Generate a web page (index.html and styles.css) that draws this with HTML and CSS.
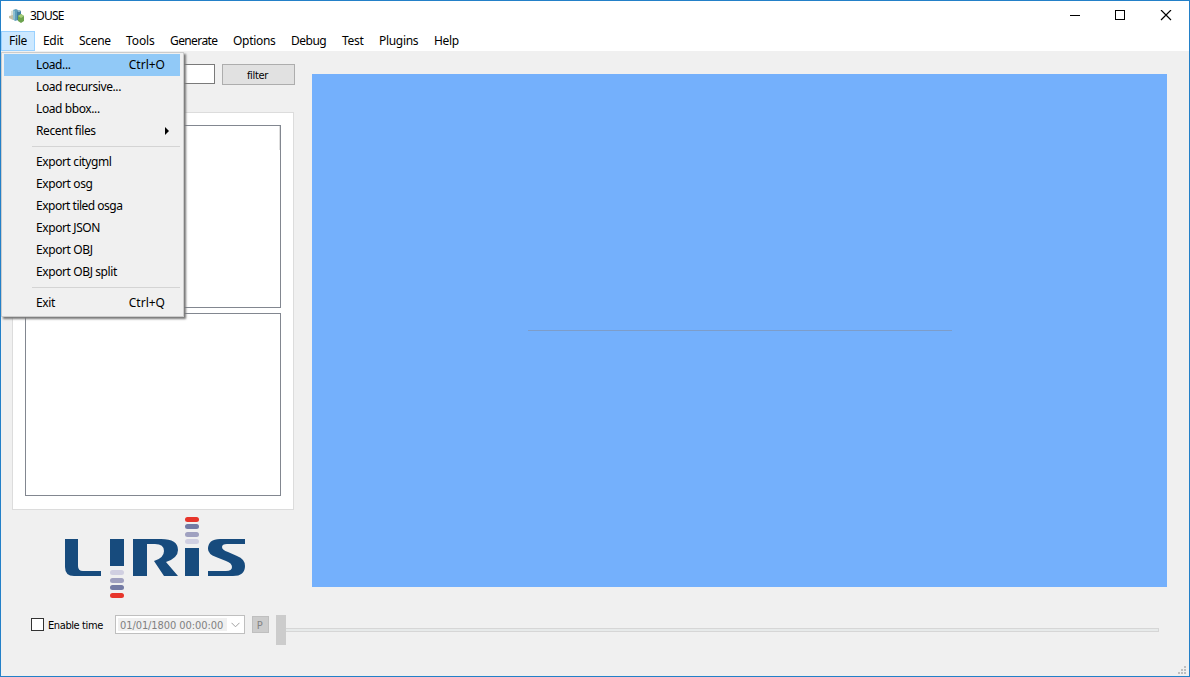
FILE: index.html
```html
<!DOCTYPE html>
<html lang="en">
<head>
<meta charset="utf-8">
<title>3DUSE</title>
<link rel="stylesheet" href="styles.css">
</head>
<body>
<div class="window">
  <header class="titlebar">
    <svg class="app-icon" width="16" height="16" viewBox="0 0 16 16">
      <path d="M2 3l3-1v7l-3 1z" fill="#dce2d6"/>
      <path d="M0 8l4-1 2 3-2 2-4-2z" fill="#c4bfa4"/>
      <path d="M4 2l3-1 2 1v10l-3 1-2-2z" fill="#5f9ebb"/>
      <path d="M4 2l2 1v9l-2-1z" fill="#8fc0d2"/>
      <path d="M8 3l2-1 2 1v8l-2 2-2-1z" fill="#427e9f"/>
      <path d="M8 3l2-1 2 1-2 1z" fill="#a6c9d3"/>
      <path d="M9 8l3-2 3 2v5l-3 2-3-2z" fill="#6ca34e"/>
      <path d="M9 8l3-2 3 2-3 2z" fill="#a5cc79"/>
    </svg>
    <span class="title">3DUSE</span>
    <svg class="controls" width="103" height="12" viewBox="0 0 103 12" fill="none" stroke="#000" shape-rendering="crispEdges">
      <path d="M0 5.500h10"/>
      <rect x="45.500" y=".5" width="9" height="9"/>
      <path d="M91 0l10 10M101 0l-10 10" shape-rendering="auto" stroke-width="1.200"/>
    </svg>
  </header>
  <nav class="menubar">
    <span class="menu-title file active">File</span><span class="menu-title edit">Edit</span><span class="menu-title scene">Scene</span><span class="menu-title tools">Tools</span><span class="menu-title generate">Generate</span><span class="menu-title options">Options</span><span class="menu-title debug">Debug</span><span class="menu-title test">Test</span><span class="menu-title plugins">Plugins</span><span class="menu-title help">Help</span>
  </nav>
  <main class="content">
    <aside class="sidebar">
      <div class="search"><div class="search-input"></div><div class="filter">filter</div></div>
      <div class="panel"><div class="tree"><i class="header-edge"></i></div><div class="tree"></div></div>
      <svg class="logo" width="182" height="82" viewBox="0 0 182 82">
        <g fill="#174b7d">
          <path d="M0 22h13v27q0 5 5 5h18v5H9q-9 0-9-9z"/>
          <path d="M45 22h14v27H45z"/>
          <path d="M68 22h28q17 0 17 11 0 8-12 12l12 14H99L89 44q10-3 10-10 0-7-9-7h-8v32H68z"/>
          <path d="M120 31h14v28h-14z"/>
          <path d="M180 22v5h-18q-5 0-5 3t6 5l9 4q8 3 8 10 0 10-12 10h-25v-5h18q6 0 6-4t-6-6l-10-4q-8-3-8-8 0-10 12-10z"/>
        </g>
        <g fill="#d0cfe1"><rect x="120" y="22" width="14" height="5" rx="2.500"/><rect x="45" y="53" width="14" height="5" rx="2.500"/></g>
        <g fill="#a0a1c0"><rect x="120" y="15" width="14" height="5" rx="2.500"/><rect x="45" y="61" width="14" height="5" rx="2.500"/></g>
        <g fill="#747ba5"><rect x="120" y="7" width="14" height="5" rx="2.500"/><rect x="45" y="68" width="14" height="5" rx="2.500"/></g>
        <g fill="#e7352b"><rect x="120" y="0" width="14" height="5" rx="2.500"/><rect x="45" y="76" width="14" height="5" rx="2.500"/></g>
      </svg>
    </aside>
    <section class="viewport"><div class="horizon"></div></section>
  </main>
  <footer class="timebar">
    <span class="checkbox"></span><span class="enable">Enable time</span>
    <div class="date"><span class="date-value">01/01/1800 00:00:00</span><svg width="9" height="6" viewBox="0 0 9 6" fill="none" stroke="#a0a0a0"><path d="M.5 .8l4 4 4-4"/></svg></div>
    <span class="play">P</span>
    <div class="slider"><span class="handle"></span><span class="track"></span></div>
  </footer>
  <svg class="grip" width="9" height="9" viewBox="0 0 9 9" fill="#bfbfbf"><path d="M6 0h2v2H6zM3 3h2v2H3zM6 3h2v2H6zM0 6h2v2H0zM3 6h2v2H3zM6 6h2v2H6z"/></svg>
  <div class="dropdown">
    <div class="item selected"><span>Load...</span><span class="key">Ctrl+O</span></div>
    <div class="item"><span>Load recursive...</span></div>
    <div class="item"><span>Load bbox...</span></div>
    <div class="item"><span>Recent files</span><svg class="arrow" width="4" height="8" viewBox="0 0 4 8"><path d="M0 0l4 4-4 4z"/></svg></div>
    <div class="separator"></div>
    <div class="item"><span>Export citygml</span></div>
    <div class="item"><span>Export osg</span></div>
    <div class="item"><span class="tight">Export tiled osga</span></div>
    <div class="item"><span>Export JSON</span></div>
    <div class="item"><span>Export OBJ</span></div>
    <div class="item"><span>Export OBJ split</span></div>
    <div class="separator"></div>
    <div class="item"><span>Exit</span><span class="key">Ctrl+Q</span></div>
  </div>
</div>
</body>
</html>
```
FILE: styles.css
```css
* { box-sizing: border-box; }
body { margin: 0; font: 12px/20px "Noto Sans", sans-serif; letter-spacing: -.3px; color: #000; }
.window { position: relative; width: 1190px; height: 677px; border: 1px solid #2380c8; background: #f0f0f0; overflow: hidden; display: flex; flex-direction: column; }
.titlebar { height: 30px; flex: none; background: #fff; display: flex; align-items: center; padding: 0 16px 0 8px; }
.app-icon { margin-right: 5px; }
.title { letter-spacing: -.8px; }
.controls { margin-left: auto; }
.menubar { height: 20px; flex: none; background: #fff; display: flex; }
.menu-title { padding-left: 8px; white-space: nowrap; }
.file { width: 34px; padding-left: 7px; }
.active { background: #cce8ff; border: 1px solid #99d1ff; line-height: 18px; }
.edit { width: 36px; }
.scene { width: 47px; }
.tools { width: 44px; letter-spacing: -.1px; }
.generate { width: 63px; letter-spacing: -.6px; }
.options { width: 58px; }
.debug { width: 51px; letter-spacing: -.5px; }
.test { width: 37px; }
.plugins { width: 55px; }
.content { display: flex; height: 549px; flex: none; padding-left: 11px; gap: 18px; }
.sidebar { width: 282px; display: flex; flex-direction: column; }
.search { display: flex; gap: 7px; padding-top: 13px; height: 61px; }
.search-input { width: 203px; flex: none; height: 20px; background: #fff; border: 1px solid #7a7a7a; }
.filter { width: 73px; flex: none; height: 21px; border: 1px solid #adadad; background: #e1e1e1; text-align: center; line-height: 21px; padding-right: 2px; font-family: "DejaVu Sans Condensed", "DejaVu Sans", sans-serif; font-size: 11px; }
.panel { height: 398px; flex: none; border: 1px solid #dcdcdc; background: #fff; padding: 12px; display: flex; flex-direction: column; gap: 5px; }
.tree { height: 183px; border: 1px solid #828790; background: #fff; display: flex; justify-content: flex-end; }
.header-edge { width: 1px; height: 24px; background: #dedede; }
.logo { margin: 7px 0 0 53px; }
.viewport { margin-top: 23px; width: 855px; height: 513px; background: #74b0fc; padding: 256px 215px 0 216px; }
.horizon { height: 1px; background: #7d9dc9; }
.timebar { height: 46px; flex: none; display: flex; align-items: flex-start; padding: 15px 30px 0; font-family: "DejaVu Sans Condensed", "DejaVu Sans", sans-serif; font-size: 11px; }
.checkbox { width: 13px; height: 13px; border: 1px solid #333; background: #fff; margin-top: 3px; }
.enable { width: 67px; margin: 1px 0 0 4px; white-space: nowrap; letter-spacing: -.4px; }
.date { width: 130px; height: 19px; border: 1px solid #bfbfbf; background: #fff; display: flex; align-items: center; justify-content: space-between; padding: 0 4px 0 2px; color: #808080; }
.date-value { width: 109px; height: 13px; line-height: 15px; background: #f0f0f0; padding-left: 2px; white-space: nowrap; letter-spacing: -.08px; }
.play { width: 17px; height: 17px; margin: 1px 7px 0; border: 1px solid #bfbfbf; background: #ccc; color: #838383; text-align: center; line-height: 17px; padding-right: 2px; }
.slider { display: flex; width: 883px; }
.handle { width: 10px; height: 30px; background: #ccc; }
.track { flex: 1; height: 4px; margin-top: 13px; border: 1px solid #d6d6d6; border-left: 0; background: #e7eaea; }
.grip { position: absolute; right: 2px; bottom: 1px; }
.dropdown { position: absolute; left: 0; top: 51px; width: 183px; height: 265px; background: #f0f0f0; border: 1px solid #ccc; padding: 1px 3px 1px 2px; box-shadow: 2px 2px 2px #777; clip-path: inset(0 -5px -5px 0); letter-spacing: -.4px; }
.item { height: 22px; display: flex; align-items: center; padding: 0 15px 0 32px; white-space: nowrap; }
.tight { letter-spacing: -.5px; }
.selected { background: #91c9f7; }
.key { margin-left: auto; letter-spacing: 0; }
.arrow { margin: 0 -4px 0 auto; }
.separator { height: 9px; padding: 4px 0; margin-left: 28px; background: #d4d4d4; background-clip: content-box; }
```
